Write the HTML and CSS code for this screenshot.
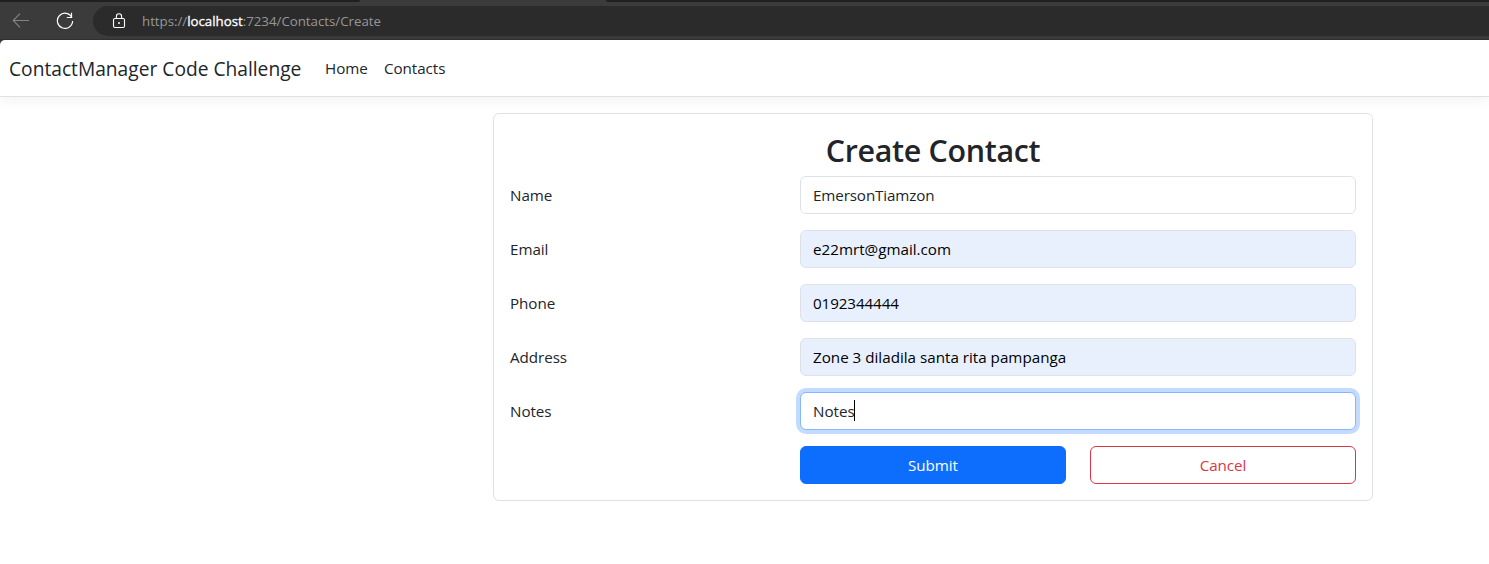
FILE: index.html
```
<!DOCTYPE html>
<html lang="en">
<head>
<meta charset="utf-8">
<title>Create Contact</title>
<link rel="stylesheet" href="styles.css">
</head>
<body>
<div class="browser">
  <div class="tabs"><span class="tab-left"></span><span class="tab-active"></span><span class="tab-right"></span></div>
  <div class="toolbar">
    <svg class="back" width="18" height="16" viewBox="0 0 18 16"><path d="M17 7.5H1.5M8 .7L1.2 7.5L8 14.3"/></svg>
    <svg class="reload" width="18" height="18" viewBox="0 0 18 18"><path d="M15.9 5.6A7.6 7.6 0 1 0 16.6 9"/><path d="M15.5 .8v4.7h-4.7"/></svg>
    <div class="address">
      <svg class="lock" width="14" height="16" viewBox="0 0 14 16"><rect x="1.5" y="5.5" width="11" height="9" rx="1.4"/><path d="M4.4 5.4V3.4a2.6 2.6 0 0 1 5.2 0v2"/><circle cx="7" cy="10" r=".4"/></svg>
      <span class="url">https://<b>localhost</b>:7234/Contacts/Create</span>
    </div>
  </div>
</div>
<div class="page">
  <header class="navbar">
    <a class="brand">ContactManager Code Challenge</a>
    <nav class="links"><a class="home">Home</a><a class="contacts">Contacts</a></nav>
  </header>
  <main>
    <form class="card">
      <h1>Create Contact</h1>
      <div class="row"><label for="name">Name</label><input id="name" class="control name" value="EmersonTiamzon"></div>
      <div class="row"><label for="email">Email</label><input id="email" class="control filled" value="e22mrt@gmail.com"></div>
      <div class="row"><label for="phone">Phone</label><input id="phone" class="control filled digits" value="0192344444"></div>
      <div class="row"><label for="address">Address</label><input id="address" class="control filled" value="Zone 3 diladila santa rita pampanga"></div>
      <div class="row"><label for="notes">Notes</label><div class="field"><input id="notes" class="control focused" value="Notes"><span class="caret"></span></div></div>
      <div class="actions"><button type="button" class="btn submit">Submit</button><button type="button" class="btn cancel">Cancel</button></div>
    </form>
  </main>
</div>
</body>
</html>
```
FILE: styles.css
```
* { box-sizing: border-box; }
body { margin: 0; height: 564px; overflow: hidden; background: #3b3b3b; color: #212529; font: 400 15.2px/24px "Open Sans", "Noto Sans", sans-serif; letter-spacing: -.05px; }
.browser { height: 40px; border-bottom: 1px solid #303030; }
.tabs { height: 2px; display: flex; background: #3b3b3b; }
.tab-left { width: 360px; background: #202020; border-bottom-right-radius: 3px; }
.tab-active { width: 246px; }
.tab-right { flex: 1; background: #202020; border-bottom-left-radius: 3px; }
.toolbar { display: flex; align-items: center; height: 38px; }
svg { fill: none; flex: none; }
.back { margin-left: 12px; stroke: #858585; stroke-width: 1.1; }
.reload { margin-left: 26px; stroke: #fff; stroke-width: 1.2; }
.address { display: flex; align-items: center; flex: 1; height: 30px; margin-left: 19px; padding-left: 19px; background: #2b2b2b; border-radius: 15px 0 0 15px; }
.lock { stroke: #fff; stroke-width: 1.1; }
.lock circle { fill: #fff; }
.url { margin-left: 16px; font-size: 13.3px; letter-spacing: -.02px; color: #979797; white-space: nowrap; }
.url b { color: #fff; font-weight: 400; -webkit-text-stroke: .3px #fff; }
.page { height: 524px; background: #fff; border-top-left-radius: 5px; overflow: hidden; }
.navbar { display: flex; align-items: center; height: 57px; padding-left: 9px; border-bottom: 1px solid #dee2e6; box-shadow: 0 4px 12px rgba(0,0,0,.05); white-space: nowrap; }
.brand { width: 292px; padding-top: 1px; font-size: 19.2px; line-height: 30px; letter-spacing: 0; }
.links { display: flex; gap: 16px; margin-left: 24px; }
.home { width: 43px; }
main { padding: 16px 0 0 493px; }
.card { width: 880px; height: 388px; padding: 16px; border: 1px solid #dee2e6; border-radius: 6px; }
h1 { margin: 0 0 6px; padding-top: 2px; font-size: 30.4px; line-height: 38px; font-weight: 600; letter-spacing: -.3px; text-align: center; }
.row { display: grid; grid-template-columns: 290px 556px; align-items: center; height: 38px; margin-bottom: 16px; }
.control { display: block; width: 100%; height: 38px; padding: 6px 12px; border: 1px solid #dee2e6; border-radius: 6px; background: #fff; color: #212529; font: inherit; letter-spacing: 0; outline: 0; }
.name { letter-spacing: -.12px; }
.digits { letter-spacing: -.1px; }
.filled { background: #e8f0fe; color: #000; }
.field { position: relative; }
.focused { border-color: #86b7fe; box-shadow: 0 0 0 4px #c2dbff; }
.caret { position: absolute; left: 54px; top: 8px; width: 1px; height: 21px; background: #000; }
.actions { display: grid; grid-template-columns: 266px 266px; gap: 24px; margin-left: 290px; }
.btn { height: 38px; border: 1px solid #0d6efd; border-radius: 6px; font: inherit; letter-spacing: inherit; }
.submit { background: #0d6efd; color: #fff; }
.cancel { background: #fff; border-color: #dc3545; color: #dc3545; }
```
